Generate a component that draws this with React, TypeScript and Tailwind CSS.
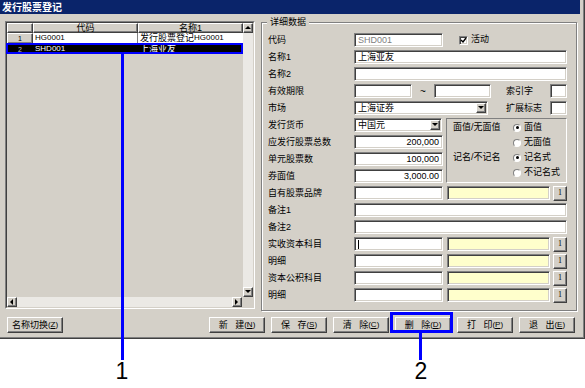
import React from "react";

const sunken =
  "border border-t-[#808080] border-l-[#808080] border-b-white border-r-white shadow-[inset_1px_1px_0_#404040,inset_-1px_-1px_0_#d4d0c8]";
const raised =
  "border border-t-white border-l-white border-b-[#404040] border-r-[#404040] shadow-[inset_-1px_-1px_0_#808080,inset_1px_1px_0_#d4d0c8]";

function Field({
  className = "",
  children,
  yellow = false,
}: {
  className?: string;
  children?: React.ReactNode;
  yellow?: boolean;
}) {
  return (
    <div
      className={`${sunken} h-[14px] shrink-0 ${yellow ? "bg-[#ffffcc]" : "bg-white"} flex items-center px-[3px] overflow-hidden text-[9px] leading-none whitespace-nowrap ${className}`}
    >
      {children}
    </div>
  );
}

function Arrow({ dir }: { dir: "up" | "down" | "left" | "right" }) {
  const pts =
    dir === "up"
      ? "1,5 7,5 4,2"
      : dir === "down"
        ? "1,2 7,2 4,5"
        : dir === "left"
          ? "5,1 5,7 2,4"
          : "2,1 2,7 5,4";
  return (
    <svg width="8" height="8" viewBox="0 0 8 8">
      <polygon points={pts} fill="#000" />
    </svg>
  );
}

function Select({ className = "", children }: { className?: string; children: React.ReactNode }) {
  return (
    <div className={`${sunken} h-[14px] shrink-0 bg-white flex items-center pl-[3px] pr-[1px] text-[9px] leading-none ${className}`}>
      <span className="flex-1 whitespace-nowrap">{children}</span>
      <div className={`${raised} w-[10px] h-[10px] bg-[#d4d0c8] flex items-center justify-center`}>
        <Arrow dir="down" />
      </div>
    </div>
  );
}

function Label({ children, className = "w-[86px]" }: { children: React.ReactNode; className?: string }) {
  return <div className={`${className} shrink-0 text-[9px] leading-[14px] whitespace-nowrap`}>{children}</div>;
}

function Row({ label, children }: { label: string; children?: React.ReactNode }) {
  return (
    <div className="flex items-center h-[14px]">
      <Label>{label}</Label>
      {children}
    </div>
  );
}

function SmallBtn() {
  return (
    <div className={`${raised} ml-[3px] w-[14px] h-[15px] shrink-0 bg-[#d4d0c8] flex items-center justify-center text-[8px] font-['Liberation_Serif',serif]`}>
      1
    </div>
  );
}

function Radio({ on, label }: { on?: boolean; label: string }) {
  return (
    <div className="flex items-center">
      <div className="w-[8px] h-[8px] rounded-full border border-t-[#808080] border-l-[#808080] border-b-white border-r-white bg-white flex items-center justify-center">
        {on ? <div className="w-[3px] h-[3px] rounded-full bg-black" /> : null}
      </div>
      <span className="ml-[3px] text-[9px] leading-none">{label}</span>
    </div>
  );
}

function Btn({ children, className = "" }: { children: React.ReactNode; className?: string }) {
  return (
    <div className={`${raised} w-[56px] h-[16px] shrink-0 bg-[#d4d0c8] flex items-center justify-center text-[9px] leading-none whitespace-nowrap ${className}`}>
      {children}
    </div>
  );
}

function Mn({ c }: { c: string }) {
  return (
    <span className="text-[8px]">
      (<span className="underline">{c}</span>)
    </span>
  );
}

export default function App() {
  return (
    <div className="relative w-[585px] h-[388px] bg-white overflow-hidden font-['Liberation_Sans','Noto_Sans_CJK_SC',sans-serif] text-black">
      {/* window */}
      <div className="w-[585px] h-[339px] bg-[#d4d0c8] shadow-[inset_-1px_-1px_0_#404040,inset_-2px_-2px_0_#808080] flex flex-col">
        <div className="w-[580px] h-[14px] bg-[#0a246a] text-white text-[10px] font-bold leading-[14px] pl-[2px] font-['Noto_Sans_CJK_SC',sans-serif]">
          发行股票登记
        </div>
        <div className="flex pl-[5px] pt-[3px]">
          {/* grid */}
          <div className="w-[250px] h-[288px] mt-[4px] border border-t-[#808080] border-l-[#808080] border-b-white border-r-white">
            <div className="w-full h-full border border-t-[#404040] border-l-[#404040] border-b-[#d4d0c8] border-r-[#d4d0c8] flex flex-col">
              <div className="flex h-[274px]">
                <div className="w-[236px] bg-[#d4d0c8] flex flex-col">
                  <div className="flex h-[10px] text-[9px] leading-none">
                    <div className={`${raised} w-[26px] bg-[#d4d0c8]`} />
                    <div className={`${raised} w-[105px] bg-[#d4d0c8] flex items-center justify-center`}>代码</div>
                    <div className={`${raised} w-[105px] bg-[#d4d0c8] flex items-center justify-center`}>名称1</div>
                  </div>
                  <div className="flex h-[11px] text-[8px] leading-none">
                    <div className={`${raised} w-[26px] bg-[#d4d0c8] flex items-center justify-center text-[7px]`}>1</div>
                    <div className="w-[105px] bg-white border-r border-b border-[#808080] flex items-center pl-[2px]">HG0001</div>
                    <div className="w-[105px] bg-white border-b border-[#808080] flex items-center pl-[2px] whitespace-nowrap">
                      <span className="text-[9px]">发行股票登记</span>HG0001
                    </div>
                  </div>
                  <div className="flex h-[10px] text-[8px] leading-none bg-black text-white">
                    <div className="w-[26px] flex items-center justify-center text-[7px] text-[#c0c0c0]">2</div>
                    <div className="w-[105px] flex items-center pl-[2px]">SHD001</div>
                    <div className="w-[105px] flex items-center pl-[2px] text-[9px]">上海亚友</div>
                  </div>
                </div>
                <div className="w-[10px] flex flex-col">
                  <div className={`${raised} h-[10px] bg-[#d4d0c8] flex items-center justify-center`}>
                    <Arrow dir="up" />
                  </div>
                  <div className="flex-1 bg-[#ebe9e5]" />
                  <div className={`${raised} h-[10px] bg-[#d4d0c8] flex items-center justify-center`}>
                    <Arrow dir="down" />
                  </div>
                </div>
              </div>
              <div className="flex h-[10px]">
                <div className={`${raised} w-[10px] bg-[#d4d0c8] flex items-center justify-center`}>
                  <Arrow dir="left" />
                </div>
                <div className="w-[215px] bg-[#ebe9e5]" />
                <div className={`${raised} w-[10px] bg-[#d4d0c8] flex items-center justify-center`}>
                  <Arrow dir="right" />
                </div>
                <div className="w-[11px] bg-[#d4d0c8]" />
              </div>
            </div>
          </div>

          {/* details group */}
          <fieldset className="ml-[6px] w-[316px] h-[294px] border border-[#808080] shadow-[inset_1px_1px_0_white,1px_1px_0_white] pl-[6px] pr-[9px] pt-[6px]">
            <legend className="ml-[-1px] px-[3px] bg-[#d4d0c8] text-[9px] leading-[10px]">详细数据</legend>
            <div className="flex flex-col gap-[3px]">
              <Row label="代码">
                <Field className="w-[89px] text-[#808080] text-[8px]">SHD001</Field>
                <div className={`ml-[16px] w-[9px] h-[9px] ${sunken} bg-white flex items-center justify-center`}>
                  <svg width="7" height="7" viewBox="0 0 7 7">
                    <path d="M1 3 L3 5 L6 1" stroke="#000" strokeWidth="1.4" fill="none" />
                  </svg>
                </div>
                <span className="ml-[3px] text-[9px]">活动</span>
              </Row>
              <Row label="名称1">
                <Field className="w-[213px]">上海亚友</Field>
              </Row>
              <Row label="名称2">
                <Field className="w-[213px]" />
              </Row>
              <Row label="有效期限">
                <Field className="w-[58px]" />
                <span className="w-[22px] text-center text-[10px]">~</span>
                <Field className="w-[57px]" />
                <Label className="ml-[15px] w-[44px]">索引字</Label>
                <Field className="w-[17px]" />
              </Row>
              <Row label="市场">
                <Select className="w-[134px]">上海证券</Select>
                <Label className="ml-[18px] w-[44px]">扩展标志</Label>
                <Field className="w-[17px]" />
              </Row>
              <div className="flex gap-[3px]">
                <div className="flex flex-col gap-[3px]">
                  <Row label="发行货币">
                    <Select className="w-[88px]">中国元</Select>
                  </Row>
                  <Row label="应发行股票总数">
                    <Field className="w-[89px] justify-end">200,000</Field>
                  </Row>
                  <Row label="单元股票数">
                    <Field className="w-[89px] justify-end">100,000</Field>
                  </Row>
                  <Row label="券面值">
                    <Field className="w-[89px] justify-end">3,000.00</Field>
                  </Row>
                </div>
                <div className="w-[121px] border border-t-[#808080] border-l-[#808080] border-b-white border-r-white grid grid-cols-[60px_1fr] grid-rows-[15px_15px_15px_15px] items-center pl-[6px] py-[1px]">
                  <span className="text-[9px] leading-none whitespace-nowrap">面值/无面值</span>
                  <Radio on label="面值" />
                  <span />
                  <Radio label="无面值" />
                  <span className="text-[9px] leading-none whitespace-nowrap">记名/不记名</span>
                  <Radio on label="记名式" />
                  <span />
                  <Radio label="不记名式" />
                </div>
              </div>
              <Row label="自有股票品牌">
                <Field className="w-[89px]" />
                <Field yellow className="ml-[4px] w-[103px]" />
                <SmallBtn />
              </Row>
              <Row label="备注1">
                <Field className="w-[213px]" />
              </Row>
              <Row label="备注2">
                <Field className="w-[213px]" />
              </Row>
              <Row label="实收资本科目">
                <Field className="w-[89px]">
                  <span className="w-px h-[9px] bg-black" />
                </Field>
                <Field yellow className="ml-[4px] w-[103px]" />
                <SmallBtn />
              </Row>
              <Row label="明细">
                <Field className="w-[89px]" />
                <Field yellow className="ml-[4px] w-[103px]" />
                <SmallBtn />
              </Row>
              <Row label="资本公积科目">
                <Field className="w-[89px]" />
                <Field yellow className="ml-[4px] w-[103px]" />
                <SmallBtn />
              </Row>
              <Row label="明细">
                <Field className="w-[89px]" />
                <Field yellow className="ml-[4px] w-[103px]" />
                <SmallBtn />
              </Row>
            </div>
          </fieldset>
        </div>

        {/* buttons */}
        <div className="flex mt-[6px] pl-[7px]">
          <Btn>
            名称切换<Mn c="Z" />
          </Btn>
          <div className="ml-[146px] flex gap-[6px]">
            <Btn>
              新&nbsp;&nbsp;&nbsp;建<Mn c="N" />
            </Btn>
            <Btn>
              保&nbsp;&nbsp;&nbsp;存<Mn c="S" />
            </Btn>
            <Btn>
              清&nbsp;&nbsp;&nbsp;除<Mn c="C" />
            </Btn>
            <Btn>
              删&nbsp;&nbsp;&nbsp;除<Mn c="D" />
            </Btn>
            <Btn>
              打&nbsp;&nbsp;&nbsp;印<Mn c="P" />
            </Btn>
            <Btn>
              退&nbsp;&nbsp;&nbsp;出<Mn c="E" />
            </Btn>
          </div>
        </div>
      </div>

      {/* annotations */}
      <div className="absolute left-[6px] top-[43px] w-[237px] h-[11px] border-2 border-[#0000ff]" />
      <div className="absolute left-[121px] top-[54px] w-[3px] h-[306px] bg-[#0000ff]" />
      <div className="absolute left-[112px] top-[360px] w-[20px] text-center text-[23px] leading-none font-['Liberation_Sans',sans-serif]">1</div>
      <div className="absolute left-[390px] top-[312px] w-[63px] h-[21px] border-[3px] border-[#0000ff]" />
      <div className="absolute left-[419px] top-[333px] w-[3px] h-[27px] bg-[#0000ff]" />
      <div className="absolute left-[411px] top-[360px] w-[20px] text-center text-[23px] leading-none font-['Liberation_Sans',sans-serif]">2</div>
    </div>
  );
}
